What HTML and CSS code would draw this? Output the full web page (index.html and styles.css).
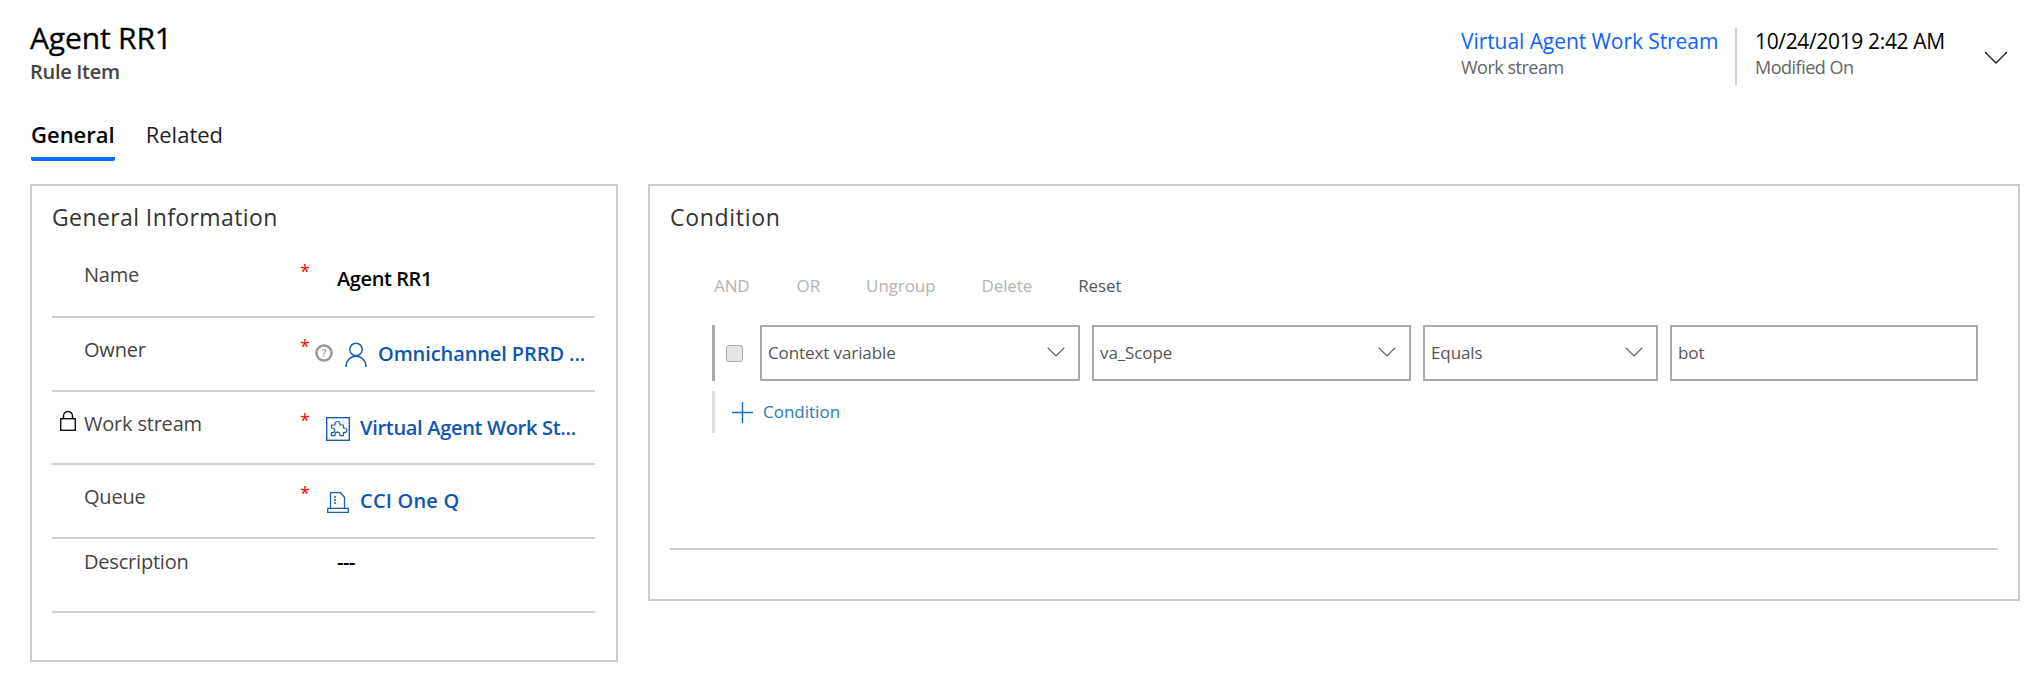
FILE: index.html
```html
<!DOCTYPE html>
<html>
<head>
<meta charset="utf-8" />
<title>Agent RR1</title>
<link rel="stylesheet" href="styles.css">
</head>
<body>
<div class="page">

  <div class="header">
    <div class="title-block">
      <h1 class="title">Agent RR1</h1>
      <div class="subtitle">Rule Item</div>
    </div>
    <div class="header-fields">
      <div class="header-field first">
        <a class="header-link">Virtual Agent Work Stream</a>
        <div class="header-label">Work stream</div>
      </div>
      <div class="header-field">
        <div class="header-value">10/24/2019 2:42 AM</div>
        <div class="header-label">Modified On</div>
      </div>
      <svg class="header-chevron" width="24" height="13" viewBox="0 0 24 13"><path d="M1 1l11 11L23 1" fill="none" stroke="#222" stroke-width="1.4"/></svg>
    </div>
  </div>

  <div class="tabs">
    <div class="tab active">General</div>
    <div class="tab">Related</div>
  </div>

  <div class="content">
    <div class="panel info-panel">
      <h2 class="panel-title">General Information</h2>

      <div class="row name-row">
        <div class="gutter"></div>
        <div class="label">Name</div>
        <div class="star">*</div>
        <div class="value plain">Agent RR1</div>
      </div>

      <div class="row">
        <div class="gutter"></div>
        <div class="label">Owner</div>
        <div class="star">*</div>
        <svg class="help-icon" width="18" height="18" viewBox="0 0 18 18"><circle cx="9" cy="9" r="7.5" fill="none" stroke="#999" stroke-width="2.6"/><text x="9" y="12.5" text-anchor="middle" class="help-mark">?</text></svg>
        <svg class="person-icon" width="22" height="25" viewBox="0 0 22 25"><g fill="none" stroke="#1b5fb5" stroke-width="1.5"><circle cx="11" cy="7.5" r="6.2"/><path d="M1 25c0-6.5 4.2-10.8 10-10.8S21 18.500 21 25"/></g></svg>
        <a class="value link owner-link">Omnichannel PRRD ...</a>
      </div>

      <div class="row">
        <div class="gutter">
          <svg class="lock-icon" width="16" height="21" viewBox="0 0 16 21"><g fill="none" stroke="#111" stroke-width="1.4"><rect x=".7" y="8.700" width="14.600" height="11.600"/><path d="M3.500 8.500V6a4.500 4.500 0 0 1 9 0v2.500"/></g></svg>
        </div>
        <div class="label">Work stream</div>
        <div class="star">*</div>
        <svg class="entity-icon" width="24" height="24" viewBox="0 0 24 24"><g fill="none" stroke="#1b5fb5"><rect x=".7" y=".7" width="22.600" height="22.600" stroke-width="1.400"/><path stroke-width="1.200" d="M5.500 8h3.500V7a2.500 2.500 0 0 1 5 0v1h3.500v3h1a2.300 2.300 0 0 1 0 4.600h-1v3h-3.500v-1a2.500 2.500 0 0 0-5 0v1H5.500v-3h1a2.300 2.300 0 0 0 0-4.600h-1z"/></g></svg>
        <a class="value link stream-link">Virtual Agent Work St...</a>
      </div>

      <div class="row">
        <div class="gutter"></div>
        <div class="label">Queue</div>
        <div class="star">*</div>
        <svg class="entity-icon queue-icon" width="22" height="21" viewBox="0 0 22 21"><g fill="none" stroke="#1b5fb5" stroke-width="1.300"><path d="M3.500 16V.7h10l4 4.500V16"/><path d="M.7 20.300v-4h20.600v4z"/><path d="M7 5h2M7 8h2M7 11h2" stroke-width="1.600"/></g></svg>
        <a class="value link queue-link">CCI One Q</a>
      </div>

      <div class="row desc-row">
        <div class="gutter"></div>
        <div class="label">Description</div>
        <div class="star"></div>
        <div class="value plain">---</div>
      </div>
    </div>

    <div class="panel condition-panel">
      <h2 class="panel-title">Condition</h2>
      <div class="toolbar">
        <span class="tool and">AND</span>
        <span class="tool or">OR</span>
        <span class="tool ungroup">Ungroup</span>
        <span class="tool delete">Delete</span>
        <span class="tool on">Reset</span>
      </div>
      <div class="cond-row">
        <div class="check"></div>
        <div class="field select first-select"><span>Context variable</span><svg width="18" height="10" viewBox="0 0 18 10"><path d="M.7.7L9 9 17.300.7" fill="none" stroke="#555" stroke-width="1.100"/></svg></div>
        <div class="field select second-select"><span>va_Scope</span><svg width="18" height="10" viewBox="0 0 18 10"><path d="M.7.7L9 9 17.300.7" fill="none" stroke="#555" stroke-width="1.100"/></svg></div>
        <div class="field select third-select"><span>Equals</span><svg width="18" height="10" viewBox="0 0 18 10"><path d="M.7.7L9 9 17.300.7" fill="none" stroke="#555" stroke-width="1.100"/></svg></div>
        <div class="field value-input"><span>bot</span></div>
      </div>
      <div class="add-row">
        <svg width="21" height="21" viewBox="0 0 21 21"><path d="M10.500 0v21M0 10.500h21" stroke="#106ebe" stroke-width="1.400"/></svg>
        <a class="add-link">Condition</a>
      </div>
      <div class="panel-rule"></div>
    </div>
  </div>

</div>
</body>
</html>
```

FILE: styles.css
```css
body {
  margin: 0;
  background: #fff;
  font-family: "Open Sans", "Noto Sans", sans-serif;
  color: #333;
}
.page {
  padding: 0 23px 0 30px;
}

/* header */
.header {
  display: flex;
  justify-content: space-between;
  height: 116px;
}
.title {
  margin: 0;
  padding-top: 18px;
  font-size: 30px;
  line-height: 40px;
  font-weight: 400;
  letter-spacing: -0.15px;
  color: #000;
  -webkit-text-stroke: 0.3px #000;
}
.subtitle {
  font-size: 20px;
  line-height: 28px;
  font-weight: 600;
  letter-spacing: -0.3px;
  color: #444;
}
.header-fields {
  display: flex;
  align-items: flex-start;
  padding-top: 28px;
}
.header-field {
  height: 57px;
  padding-left: 18px;
  border-left: 2px solid #d2d2d2;
  width: 200px;
}
.header-field.first {
  border-left: none;
  padding-left: 0;
  width: 274px;
}
.header-link {
  display: block;
  font-size: 21px;
  line-height: 27px;
  letter-spacing: -0.07px;
  color: #0f62fe;
}
.header-value {
  font-size: 21px;
  line-height: 27px;
  letter-spacing: -0.35px;
  color: #000;
}
.header-label {
  font-size: 18px;
  line-height: 25px;
  letter-spacing: -0.5px;
  color: #666;
}
.header-chevron {
  margin-top: 23px;
  margin-left: 29px;
  margin-right: 12px;
}

/* tabs */
.tabs {
  display: flex;
  gap: 31px;
  height: 68px;
  padding-left: 1px;
}
.tab {
  height: 41px;
  font-size: 22px;
  line-height: 36px;
  letter-spacing: 0;
  color: #222;
}
.tab.active {
  border-bottom: 4px solid #0b6aff;
  border-radius: 0 0 2px 2px;
  font-weight: 600;
  color: #000;
}

/* panels */
.content {
  display: flex;
  align-items: flex-start;
  gap: 30px;
}
.panel {
  box-sizing: border-box;
  border: 2px solid #ccc;
}
.info-panel {
  width: 588px;
  height: 478px;
  padding: 0 21px 0 20px;
}
.condition-panel {
  flex: 1;
  height: 417px;
  padding: 0 20px;
}
.panel-title {
  margin: 0;
  height: 57px;
  padding-top: 15px;
  box-sizing: border-box;
  font-size: 23px;
  line-height: 32px;
  font-weight: 400;
  letter-spacing: 0.7px;
  color: #333;
}
.info-panel .panel-title {
  letter-spacing: 0.4px;
}

/* form rows */
.row {
  display: flex;
  align-items: flex-start;
  box-sizing: border-box;
  height: 73.5px;
  padding-top: 18px;
  border-bottom: 2px solid #d2d2d2;
}
.name-row {
  height: 75px;
}
.desc-row {
  padding-top: 9px;
  height: 74px;
}
.gutter {
  width: 32px;
  flex: none;
}
.label {
  width: 216px;
  flex: none;
  font-size: 20px;
  line-height: 28px;
  letter-spacing: -0.2px;
  color: #444;
}
.star {
  width: 15px;
  flex: none;
  font-size: 18px;
  line-height: 20px;
  color: #f00;
}
.value {
  font-size: 20px;
  line-height: 28px;
  letter-spacing: -0.1px;
  margin-top: 4px;
  white-space: nowrap;
}
.plain {
  margin-left: 22px;
  font-weight: 600;
  letter-spacing: -0.4px;
  color: #000;
}
.desc-row .value {
  margin-top: 0;
}
.link {
  font-weight: 600;
  color: #0f55b3;
}
.stream-link {
  letter-spacing: -0.3px;
}
.queue-link {
  letter-spacing: 0.2px;
}
.owner-link {
  margin-left: 11px;
}
.help-icon {
  margin-top: 8px;
  flex: none;
}
.help-mark {
  font-size: 10px;
  font-weight: 600;
  fill: #999;
}
.person-icon {
  margin-top: 6px;
  margin-left: 12px;
  flex: none;
}
.lock-icon {
  display: block;
  margin: 0 0 0 8px;
}
.entity-icon {
  margin: 7px 10px 0 11px;
  flex: none;
}
.queue-icon {
  margin: 9px 11px 0 12px;
}

/* condition builder */
.toolbar {
  display: flex;
  height: 82px;
  padding: 30px 0 0 44px;
  box-sizing: border-box;
  font-size: 17px;
  line-height: 26px;
  letter-spacing: -0.1px;
}
.tool {
  color: #b3b3b3;
}
.tool.on {
  color: #555;
}
.and { margin-right: 47px; }
.or { margin-right: 46px; }
.ungroup { margin-right: 46px; }
.delete { margin-right: 46px; }

.cond-row {
  display: flex;
  align-items: center;
  margin-left: 42px;
  height: 56px;
  width: 1266px;
  border-left: 3px solid #aaa;
}
.check {
  box-sizing: border-box;
  width: 17px;
  height: 17px;
  margin: 0 17px 0 11px;
  border: 1px solid #aaa;
  border-radius: 3px;
  background: #e6e6e6;
}
.field {
  box-sizing: border-box;
  display: flex;
  align-items: center;
  justify-content: space-between;
  height: 56px;
  padding: 0 13px 2px 6px;
  border: 2px solid #aaa;
  font-size: 17px;
  letter-spacing: -0.1px;
  color: #555;
}
.first-select { width: 320px; margin-right: 12px; }
.second-select { width: 319px; margin-right: 12px; }
.third-select { width: 235px; margin-right: 12px; }
.value-input { width: 308px; }

.add-row {
  display: flex;
  align-items: center;
  box-sizing: border-box;
  margin: 10px 0 0 42px;
  height: 42px;
  padding-left: 17px;
  border-left: 3px solid #ddd;
}
.add-link {
  margin-left: 10px;
  margin-top: -1px;
  font-size: 17px;
  letter-spacing: 0;
  color: #2a7ab5;
}
.panel-rule {
  margin-top: 115px;
  height: 2px;
  background: #d2d2d2;
}
```
